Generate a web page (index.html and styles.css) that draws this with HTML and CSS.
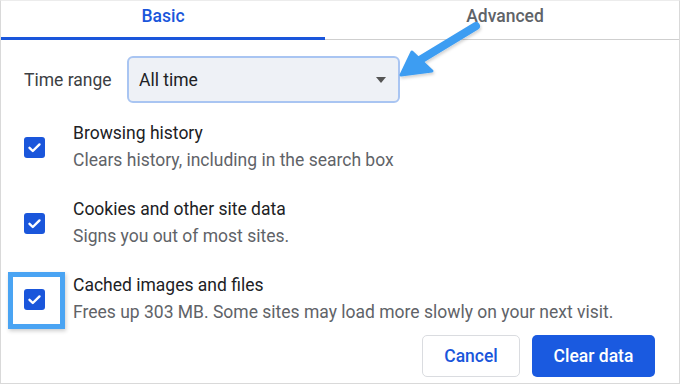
FILE: index.html
```html
<!DOCTYPE html>
<html lang="en">
<head>
    <meta charset="UTF-8">
    <meta name="viewport" content="width=device-width, initial-scale=1.0">
    <title>Clear browsing data</title>
    <link rel="stylesheet" href="styles.css">
</head>
<body>
    <div class="dialog">
        <!-- Tabs -->
        <div class="tabs">
            <div class="tab tab-active">Basic</div>
            <div class="tab">Advanced</div>
        </div>

        <!-- Time range -->
        <div class="range-row">
            <span class="range-label">Time range</span>
            <div class="select">
                <span>All time</span>
                <span class="caret"></span>
            </div>
        </div>

        <!-- Options -->
        <div class="options">
            <div class="option">
                <div class="check-wrap"><span class="checkbox">
                    <svg viewBox="0 0 21 21" width="21" height="21"><path d="M5.5 10.8l3.3 3.2 6.7-6.6" fill="none" stroke="#fff" stroke-width="2.4" stroke-linecap="round" stroke-linejoin="round"/></svg>
                </span></div>
                <div class="option-text">
                    <div class="option-title">Browsing history</div>
                    <div class="option-sub">Clears history, including in the search box</div>
                </div>
            </div>
            <div class="option">
                <div class="check-wrap"><span class="checkbox">
                    <svg viewBox="0 0 21 21" width="21" height="21"><path d="M5.5 10.8l3.3 3.2 6.7-6.6" fill="none" stroke="#fff" stroke-width="2.4" stroke-linecap="round" stroke-linejoin="round"/></svg>
                </span></div>
                <div class="option-text">
                    <div class="option-title">Cookies and other site data</div>
                    <div class="option-sub">Signs you out of most sites.</div>
                </div>
            </div>
            <div class="option">
                <div class="check-wrap"><span class="checkbox">
                    <svg viewBox="0 0 21 21" width="21" height="21"><path d="M5.5 10.8l3.3 3.2 6.7-6.6" fill="none" stroke="#fff" stroke-width="2.4" stroke-linecap="round" stroke-linejoin="round"/></svg>
                </span><span class="highlight"></span></div>
                <div class="option-text">
                    <div class="option-title">Cached images and files</div>
                    <div class="option-sub">Frees up 303 MB. Some sites may load more slowly on your next visit.</div>
                </div>
            </div>
        </div>

        <!-- Buttons -->
        <div class="actions">
            <button class="btn btn-cancel">Cancel</button>
            <button class="btn btn-primary">Clear data</button>
        </div>

        <!-- Annotation arrow -->
        <svg class="arrow" viewBox="390 15 100 70" width="100" height="70">
            <defs>
                <filter id="shadow" x="-20%" y="-20%" width="140%" height="140%">
                    <feDropShadow dx="1" dy="2" stdDeviation="1.5" flood-color="#000" flood-opacity="0.18"/>
                </filter>
            </defs>
            <g filter="url(#shadow)" fill="#3d9df2" stroke="#3d9df2">
                <line x1="476" y1="26" x2="415" y2="63" stroke-width="8" stroke-linecap="round"/>
                <polygon points="401,75 412,52 432,71" stroke-width="3" stroke-linejoin="round"/>
            </g>
        </svg>
    </div>
</body>
</html>
```

FILE: styles.css
```css
/* Global */
body {
    margin: 0;
    background: #fff;
    font-family: 'Roboto', 'Liberation Sans', sans-serif;
    color: #202124;
}

.dialog {
    position: relative;
    box-sizing: border-box;
    width: 680px;
    height: 384px;
    border: 1px solid #d9d9d9;
    border-top-color: #ececec;
    display: flex;
    flex-direction: column;
}

/* Tabs */
.tabs {
    display: flex;
    height: 39px;
}

.tab {
    flex: 1;
    display: flex;
    justify-content: center;
    padding-top: 5px;
    padding-left: 6px;
    font-size: 17.5px;
    font-weight: 500;
    color: #5f6368;
    border-bottom: 1px solid #cfcfcf;
}

.tab-active {
    flex: 0 0 324px;
    color: #1a56db;
    border-bottom: 3px solid #1a56db;
    padding-left: 0;
}

/* Time range */
.range-row {
    display: flex;
    align-items: center;
    margin-top: 16px;
    padding-left: 23px;
}

.range-label {
    font-size: 17.5px;
    color: #3c4043;
    width: 103px;
}

.select {
    box-sizing: border-box;
    width: 273px;
    height: 47px;
    border: 2px solid #a9c5f2;
    border-radius: 6px;
    background: #eef1f6;
    display: flex;
    align-items: center;
    justify-content: space-between;
    padding: 0 12px 0 10px;
    font-size: 17.5px;
    color: #202124;
}

.caret {
    width: 0;
    height: 0;
    border-left: 5px solid transparent;
    border-right: 5px solid transparent;
    border-top: 6px solid #555;
}

/* Options */
.options {
    display: flex;
    flex-direction: column;
    gap: 22px;
    margin-top: 17px;
}

.option {
    display: flex;
    align-items: center;
}

.check-wrap {
    position: relative;
    width: 21px;
    height: 21px;
    margin: 0 28px 0 23px;
}

.checkbox {
    display: block;
    width: 21px;
    height: 21px;
    border-radius: 3px;
    background: #1a56db;
}

.checkbox svg {
    display: block;
}

.highlight {
    position: absolute;
    left: -16px;
    top: -17px;
    width: 57px;
    height: 57px;
    box-sizing: border-box;
    border: 5px solid #4aa4f3;
    box-shadow: 1px 2px 4px rgba(0, 0, 0, 0.2);
}

.option-title {
    font-size: 17.5px;
    line-height: 27px;
    color: #202124;
}

.option-sub {
    font-size: 17.5px;
    line-height: 27px;
    color: #5f6368;
}

/* Buttons */
.actions {
    display: flex;
    justify-content: flex-end;
    gap: 12px;
    margin-top: 9px;
    padding-right: 24px;
}

.btn {
    font-family: 'Roboto', 'Liberation Sans', sans-serif;
    font-size: 17.5px;
    font-weight: 500;
    height: 42px;
    border-radius: 5px;
    cursor: pointer;
}

.btn-cancel {
    width: 98px;
    background: #fff;
    color: #1a56db;
    border: 1px solid #dadce0;
}

.btn-primary {
    width: 123px;
    background: #1a5ae0;
    color: #fff;
    border: none;
}

/* Annotation arrow */
.arrow {
    position: absolute;
    left: 389px;
    top: 14px;
}
```
